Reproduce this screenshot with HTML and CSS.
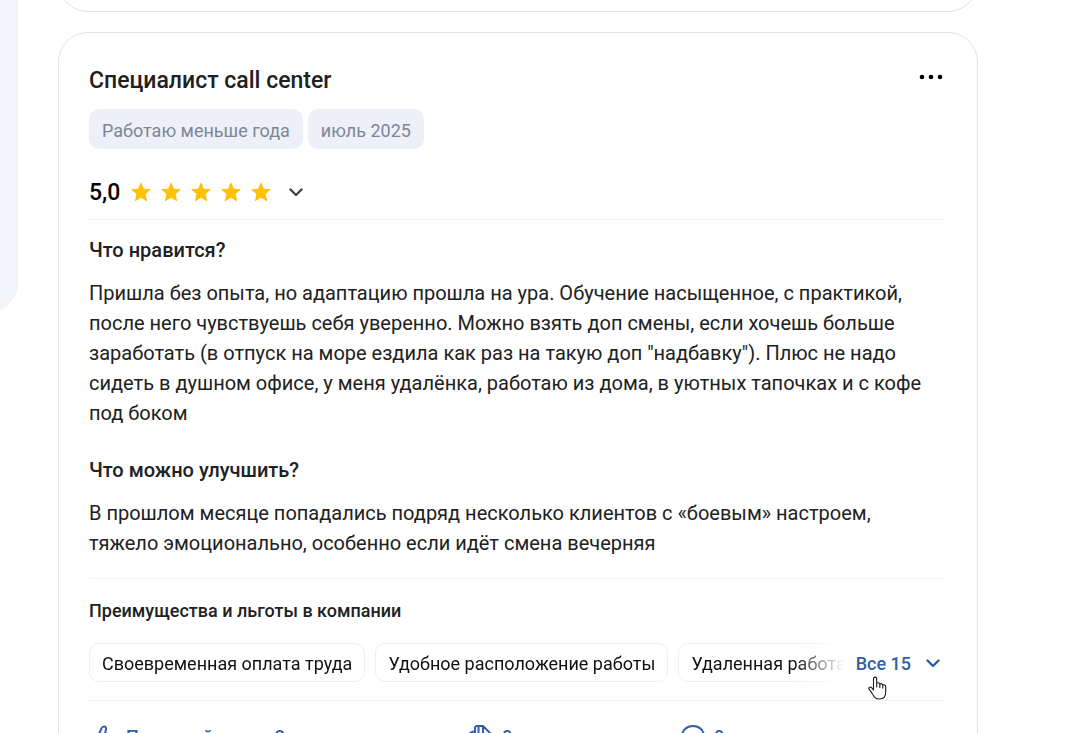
FILE: index.html
```html
<!DOCTYPE html>
<html lang="ru">
<head>
<meta charset="utf-8">
<meta name="viewport" content="width=device-width, initial-scale=1">
<title>Отзывы о компании</title>
<link rel="stylesheet" href="styles.css">
</head>
<body>
<svg class="sprite" aria-hidden="true">
  <symbol id="star" viewBox="0 0 20 20"><path d="M10 0 L12.9 6.7 L20 7.3 L14.6 12.1 L16.3 19.6 L10 15.7 L3.7 19.6 L5.4 12.1 L0 7.3 L7.1 6.7 Z"/></symbol>
  <symbol id="chevron" viewBox="0 0 14 9"><path d="M1.5 1.5 L7 7 L12.5 1.5" fill="none" stroke="currentColor" stroke-width="2.4" stroke-linecap="round" stroke-linejoin="round"/></symbol>
</svg>
<div class="page">
  <aside class="sidebar" aria-label="Фильтры"></aside>
  <main class="feed">
    <article class="card card-previous"></article>
    <article class="card review">
      <header class="review-head">
        <h2 class="title">Специалист call center</h2>
        <button class="more" type="button" aria-label="Ещё">
          <svg width="24" height="6" viewBox="0 0 24 6"><circle cx="3" cy="3" r="2.3"/><circle cx="12" cy="3" r="2.3"/><circle cx="21" cy="3" r="2.3"/></svg>
        </button>
      </header>
      <div class="tags">
        <span class="tag">Работаю меньше года</span>
        <span class="tag">июль 2025</span>
      </div>
      <div class="rating">
        <span class="score">5,0</span>
        <span class="stars" role="img" aria-label="5 из 5">
          <svg><use href="#star"/></svg><svg><use href="#star"/></svg><svg><use href="#star"/></svg><svg><use href="#star"/></svg><svg><use href="#star"/></svg>
        </span>
        <button class="toggle" type="button" aria-label="Подробные оценки"><svg class="chevron"><use href="#chevron"/></svg></button>
      </div>
      <section class="answers">
        <h3 class="question">Что нравится?</h3>
        <p class="answer">Пришла без опыта, но адаптацию прошла на ура. Обучение насыщенное, с практикой, после него чувствуешь себя уверенно. Можно взять доп смены, если хочешь больше заработать (в отпуск на море ездила как раз на такую доп "надбавку"). Плюс не надо сидеть в душном офисе, у меня удалёнка, работаю из дома, в уютных тапочках и с кофе под боком</p>
        <h3 class="question">Что можно улучшить?</h3>
        <p class="answer">В прошлом месяце попадались подряд несколько клиентов с «боевым» настроем, тяжело эмоционально, особенно если идёт смена вечерняя</p>
      </section>
      <section class="benefits">
        <h4 class="benefits-title">Преимущества и льготы в компании</h4>
        <div class="benefits-row">
          <ul class="chips">
            <li class="chip">Своевременная оплата труда</li>
            <li class="chip">Удобное расположение работы</li>
            <li class="chip">Удаленная работа</li>
          </ul>
          <button class="all" type="button">Все 15 <svg class="chevron"><use href="#chevron"/></svg></button>
          <svg class="cursor" viewBox="0 0 19 24" aria-hidden="true"><path d="M5.5 14 V2.8 C5.5 .5 8.7 .5 8.7 2.8 V8 C9.2 6.2 11.8 6.5 11.8 8.5 C12.5 7 14.8 7.5 14.8 9.4 C15.8 8.2 17.7 8.9 17.7 10.7 V16 C17.7 20.5 15.5 23 11.5 23 C7.5 23 6.5 21.5 4.8 18.5 C3.5 16 2 14.6 1 13.1 C.3 11.3 2.4 10.5 3.5 11.6 Z M8.7 8 V11.5 M11.8 8.5 V12 M14.8 9.4 V12.5" fill="#fff" stroke="#16182c" stroke-width="1.1" stroke-linejoin="round"/></svg>
        </div>
      </section>
      <footer class="actions">
        <button class="action" type="button"><svg class="icon" viewBox="0 0 26 26"><path d="M2 12 H6 V24 H2 Z M6 12 L9.5 4.5 C10.500 2 14.500 1.500 14 5 L13 10 H22 C24 10 25 12 24 14 L21 22 C20.5 23.5 19.5 24 18 24 H6"/></svg>Полезный отзыв 2</button>
        <button class="action" type="button"><svg class="icon" viewBox="0 0 26 26"><path d="M7 19 H4 C2 19 1 17 2 15 L2 10 C2 8 3.500 7.500 7 7.500 V4 C7 2.500 8 2 9 2 H15 L23 10 V20 C23 23 21 24 19 24 H11 C8 24 7 23 7 20 V7 M10.500 2 V10 M15 2 V10 H23"/></svg>0</button>
        <button class="action" type="button"><svg class="icon" viewBox="0 0 26 26"><path d="M13 2 C6.500 2 2 6.500 2 12.500 C2 15 3 17 4 18.500 L2.500 24 L8 22 C9.500 23 11 23.500 13 23.500 C19.500 23.500 24 18.500 24 12.500 C24 6.500 19.500 2 13 2 Z"/></svg>0</button>
      </footer>
    </article>
  </main>
</div>
</body>
</html>
```
FILE: styles.css
```css
* { box-sizing: border-box; }
body {
  margin: 0;
  background: #fff;
  color: #212121;
  font-family: Roboto, "Noto Sans", sans-serif;
  font-size: 20px;
  line-height: 30px;
}
h2, h3, h4, p, ul { margin: 0; padding: 0; }
button {
  border: 0;
  padding: 0;
  background: none;
  color: inherit;
  font: inherit;
  cursor: pointer;
}
svg { display: block; flex: none; }
.sprite { position: absolute; width: 0; height: 0; }

.page {
  display: flex;
  align-items: flex-start;
  gap: 40px;
  height: 100vh;
  overflow: hidden;
}
.sidebar {
  flex: none;
  width: 300px;
  height: 312px;
  margin-left: -282px;
  border-right: 1px solid #ebedf5;
  border-bottom-right-radius: 30px;
  background: #f4f5fb;
}
.feed {
  flex: 1;
  display: flex;
  flex-direction: column;
  gap: 20px;
  min-width: 0;
  max-width: 920px;
}
.card {
  border: 1px solid #dde2eb;
  border-radius: 30px;
  background: #fff;
}
.card-previous { height: 100px; margin-top: -88px; }
.review { padding: 30px 31px 30px 30px; }

.review-head {
  display: flex;
  align-items: flex-start;
  justify-content: space-between;
}
.title { padding-top: 2px; font-size: 23px; font-weight: 500; line-height: 32px; }
.more { padding: 11px 3px; }

.tags { display: flex; flex-wrap: wrap; gap: 5px; margin-top: 12px; }
.tag {
  padding: 7px 13px 3px;
  border-radius: 10px;
  background: #edf0f8;
  color: #7c8796;
  font-size: 18px;
}

.rating {
  display: flex;
  align-items: center;
  margin-top: 27px;
  padding-bottom: 11px;
  border-bottom: 1px solid #f3f4f6;
}
.score { padding-top: 2px; color: #000; font-size: 23px; font-weight: 500; }
.stars { display: flex; gap: 10px; margin: 0 18px 0 11px; fill: #ffc107; }
.stars svg { width: 20px; height: 20px; }
.toggle { color: #444; }
.chevron { width: 14px; height: 9px; }

.answers { padding: 15px 0 20px; border-bottom: 1px solid #f3f4f6; }
.question { margin-bottom: 13px; font-size: 20px; font-weight: 500; }
.answer { padding-right: 12px; }
.answer + .question { margin-top: 27px; }

.benefits { padding: 17px 0 18px; border-bottom: 1px solid #f3f4f6; }
.benefits-title { font-size: 18px; font-weight: 500; }
.benefits-row { position: relative; display: flex; align-items: center; margin-top: 17px; }
.chips {
  flex: 1;
  display: flex;
  gap: 10px;
  min-width: 0;
  overflow: hidden;
  list-style: none;
  -webkit-mask-image: linear-gradient(to left, transparent, #000 50px);
  mask-image: linear-gradient(to left, transparent, #000 50px);
}
.chip {
  flex: none;
  padding: 5px 12px 2px;
  border: 1px solid #eeeff6;
  border-radius: 10px;
  color: #111;
  font-size: 18px;
}
.all {
  display: flex;
  align-items: center;
  gap: 15px;
  margin: 0 6px 0 12px;
  padding-top: 2px;
  color: #315fa8;
  font-size: 18px;
  font-weight: 500;
}
.cursor { position: absolute; top: 33px; right: 59px; width: 19px; height: 24px; }

.actions {
  display: grid;
  grid-template-columns: 376px 212px 1fr;
  padding-top: 21px;
}
.action {
  display: flex;
  align-items: center;
  gap: 8px;
  padding-left: 3px;
  color: #315fa8;
  font-size: 18px;
  font-weight: 500;
}
.icon { width: 26px; height: 26px; fill: none; stroke: currentColor; stroke-width: 2; stroke-linejoin: round; }
```
